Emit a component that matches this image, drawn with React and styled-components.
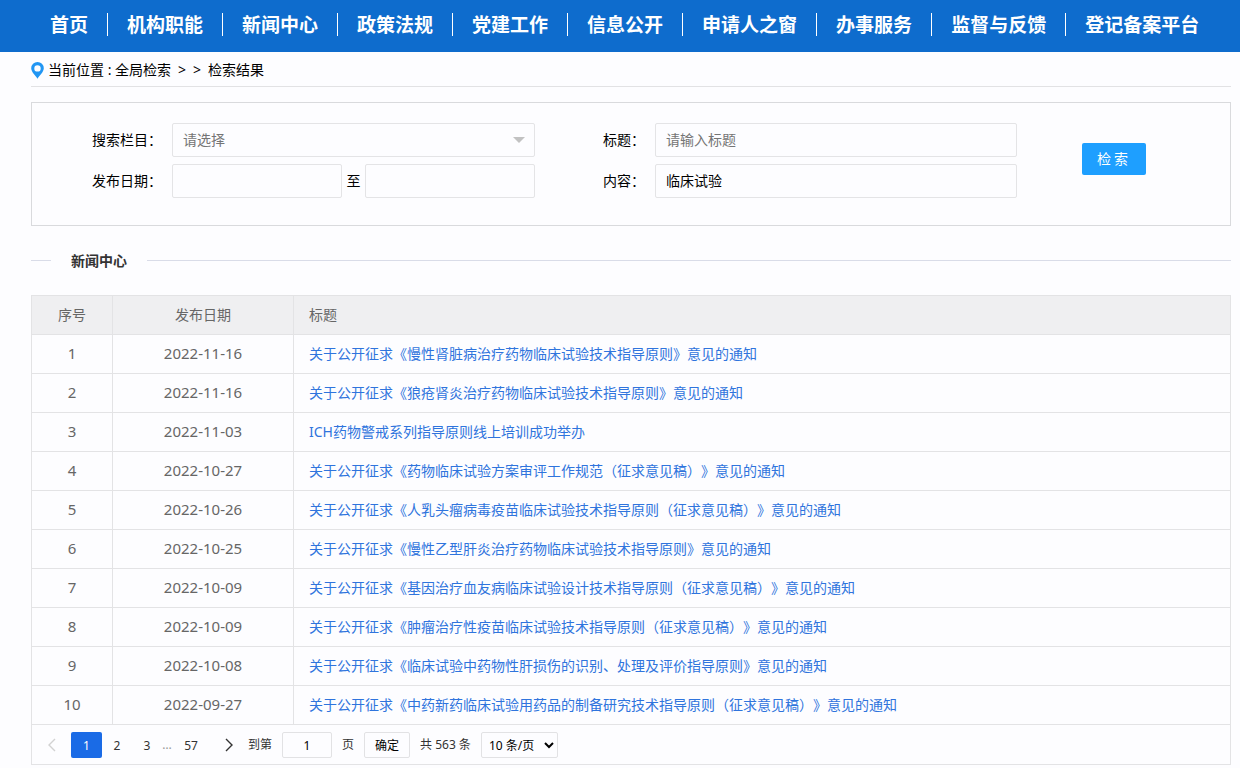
import React from "react";
import styled, { createGlobalStyle } from "styled-components";

const GlobalStyle = createGlobalStyle`
  *, *::before, *::after { box-sizing: border-box; }
  body {
    margin: 0;
    background: #fdfdff;
    color: #000;
    font: 14px/20px "Noto Sans", "Noto Sans CJK SC", sans-serif;
    text-spacing-trim: space-all;
  }
  input, select, button { font-family: inherit; margin: 0; }
  a { text-decoration: none; }
`;

const NavBar = styled.nav`
  display: flex;
  height: 52px;
  padding: 13px 0 0 31px;
  background: #0e6ccd;
`;

const NavLink = styled.a`
  height: 23px;
  padding: 0 19px;
  color: #fff;
  font-size: 19px;
  font-weight: 700;
  line-height: 25px;
  white-space: nowrap;
  & + & { border-left: 1px solid #fff; }
`;

const Page = styled.main`
  padding: 0 9px 3px 31px;
`;

const Breadcrumb = styled.div`
  display: flex;
  align-items: center;
  height: 35px;
  padding-top: 2px;
  border-bottom: 1px solid #e2e2e4;
`;

const PinIcon = styled.svg`
  width: 13px;
  height: 18px;
  margin-right: 4px;
`;

const CrumbSign = styled.span`
  margin-left: 7px;
  & + a { margin-left: 7px; }
`;

const CrumbLink = styled.a`
  color: #000;
`;

const SearchPanel = styled.form`
  display: grid;
  grid-template-columns: 80px minmax(0, 1fr) 56px minmax(0, 1fr) 64px;
  grid-template-rows: 34px 34px;
  row-gap: 7px;
  align-items: center;
  margin-top: 15px;
  padding: 20px 84px 27px 60px;
  border: 1px solid #d9dadd;
`;

const FieldLabel = styled.label`
  justify-self: end;
  margin-right: 10px;
  white-space: nowrap;
`;

const FieldCell = styled.div`
  position: relative;
  display: flex;
  align-items: center;
  margin-right: ${(p) => p.$after}px;
`;

const TextBox = styled.input`
  flex: 1;
  min-width: 0;
  height: 34px;
  padding: 0 10px 2px;
  border: 1px solid #e4e4e6;
  border-radius: 2px;
  background: #fdfdff;
  color: #000;
  font-size: 14px;
  &::placeholder { color: #757575; }
`;

const ColumnSelect = styled.select`
  width: 100%;
  height: 34px;
  padding: 0 30px 2px 10px;
  appearance: none;
  border: 1px solid #e4e4e6;
  border-radius: 2px;
  background: #fdfdff;
  color: #757575;
  font-size: 14px;
`;

const Caret = styled.span`
  position: absolute;
  right: 10px;
  top: 14px;
  border: 6px solid transparent;
  border-top-color: #c2c2c2;
  border-bottom: 0;
  pointer-events: none;
`;

const DateJoin = styled.span`
  width: 23px;
  text-align: center;
`;

const SearchButton = styled.button`
  grid-column: 5;
  grid-row: 1 / span 2;
  height: 32px;
  padding: 0 0 2px;
  margin-bottom: 4px;
  border: 0;
  border-radius: 2px;
  background: #1e9fff;
  color: #fff;
  font-size: 14px;
  letter-spacing: 3px;
`;

const SectionTitle = styled.h2`
  display: flex;
  align-items: center;
  gap: 20px;
  margin: 25px 0;
  color: #333;
  font-size: 14px;
  line-height: 19px;
  &::before, &::after {
    content: "";
    width: 20px;
    height: 1px;
    background: #d9dce8;
  }
  &::after { flex: 1; }
`;

const ResultTable = styled.table`
  width: 100%;
  table-layout: fixed;
  border-collapse: collapse;
  color: #666;
`;

const Row = styled.tr`
  height: 39px;
  background: ${(p) => (p.$head ? "#efeff1" : "transparent")};
`;

const HeadCell = styled.th`
  width: ${(p) => p.$width || "auto"};
  padding: 0 15px;
  border: 1px solid #e3e3e5;
  font-weight: 400;
  text-align: ${(p) => p.$align || "center"};
`;

const Cell = styled.td`
  padding: ${(p) => (p.$align ? "0 15px" : "0 15px 2px")};
  border: 1px solid #e3e3e5;
  font-size: ${(p) => (p.$align ? 14 : 15)}px;
  text-align: ${(p) => p.$align || "center"};
`;

const TitleLink = styled.a`
  color: #2f74dd;
`;

const Pager = styled.div`
  display: flex;
  align-items: center;
  padding: 7px 1px 6px;
  border: 1px solid #e3e3e5;
  border-top: 0;
  color: #333;
  font-size: 12px;
`;

const PageButton = styled.button`
  display: flex;
  align-items: center;
  justify-content: center;
  width: ${(p) => (p.$wide ? 38 : p.$current ? 31 : 30)}px;
  height: 26px;
  padding: 0;
  border: 0;
  border-radius: ${(p) => (p.$current ? 2 : 0)}px;
  background: ${(p) => (p.$current ? "#1a6be6" : "transparent")};
  color: ${(p) => (p.$current ? "#fff" : "#333")};
  font-size: 12px;
`;

const Ellipsis = styled.span`
  width: 10px;
  color: #999;
  text-align: center;
`;

const JumpTools = styled.div`
  display: flex;
  align-items: center;
  gap: 10px;
  white-space: nowrap;
`;

const JumpLabel = styled.label`
  display: flex;
  align-items: center;
  gap: 10px;
`;

const JumpInput = styled.input`
  width: 50px;
  height: 26px;
  padding: 0;
  border: 1px solid #e2e2e4;
  border-radius: 2px;
  background: #fdfdff;
  font-size: 12px;
  text-align: center;
`;

const ConfirmButton = styled.button`
  width: 46px;
  height: 26px;
  padding: 0;
  border: 1px solid #e2e2e4;
  border-radius: 2px;
  background: #fdfdff;
  color: #000;
  font-size: 12px;
`;

const SizeSelect = styled.select`
  width: 77px;
  height: 26px;
  padding: 0 0 0 3px;
  border: 1px solid #e2e2e4;
  border-radius: 2px;
  background: #fdfdff;
  color: #000;
  font-size: 12px;
`;

const navItems = [
  "首页", "机构职能", "新闻中心", "政策法规", "党建工作",
  "信息公开", "申请人之窗", "办事服务", "监督与反馈", "登记备案平台",
];

const results = [
  ["2022-11-16", "关于公开征求《慢性肾脏病治疗药物临床试验技术指导原则》意见的通知"],
  ["2022-11-16", "关于公开征求《狼疮肾炎治疗药物临床试验技术指导原则》意见的通知"],
  ["2022-11-03", "ICH药物警戒系列指导原则线上培训成功举办"],
  ["2022-10-27", "关于公开征求《药物临床试验方案审评工作规范（征求意见稿）》意见的通知"],
  ["2022-10-26", "关于公开征求《人乳头瘤病毒疫苗临床试验技术指导原则（征求意见稿）》意见的通知"],
  ["2022-10-25", "关于公开征求《慢性乙型肝炎治疗药物临床试验技术指导原则》意见的通知"],
  ["2022-10-09", "关于公开征求《基因治疗血友病临床试验设计技术指导原则（征求意见稿）》意见的通知"],
  ["2022-10-09", "关于公开征求《肿瘤治疗性疫苗临床试验技术指导原则（征求意见稿）》意见的通知"],
  ["2022-10-08", "关于公开征求《临床试验中药物性肝损伤的识别、处理及评价指导原则》意见的通知"],
  ["2022-09-27", "关于公开征求《中药新药临床试验用药品的制备研究技术指导原则（征求意见稿）》意见的通知"],
];

function Chevron({ d, color }) {
  return (
    <svg width="8" height="14" viewBox="0 0 8 14" fill="none" stroke={color} strokeWidth="1.4">
      <path d={d} />
    </svg>
  );
}

export default function App() {
  return (
    <>
      <GlobalStyle />
      <NavBar>
        {navItems.map((name) => (
          <NavLink href="#" key={name}>{name}</NavLink>
        ))}
      </NavBar>
      <Page>
        <Breadcrumb>
          <PinIcon viewBox="0 0 13 18" aria-hidden="true">
            <path
              fill="#2196f3"
              fillRule="evenodd"
              d="M6.5 1A6.3 6.3 0 0 0 .2 7.300c0 3.600 3.900 6.600 6.300 10.500 2.400-3.900 6.300-6.900 6.300-10.500A6.300 6.300 0 0 0 6.500 1Zm0 3.200a3.200 3.200 0 1 1 0 6.400 3.200 3.200 0 0 1 0-6.400Z"
            />
          </PinIcon>
          <span>当前位置&nbsp;:&nbsp;</span>
          <CrumbLink href="#">全局检索</CrumbLink>
          <CrumbSign>&gt;</CrumbSign>
          <CrumbSign>&gt;</CrumbSign>
          <CrumbLink href="#">检索结果</CrumbLink>
        </Breadcrumb>

        <SearchPanel onSubmit={(e) => e.preventDefault()}>
          <FieldLabel htmlFor="column">搜索栏目：</FieldLabel>
          <FieldCell $after={64}>
            <ColumnSelect id="column">
              <option>请选择</option>
            </ColumnSelect>
            <Caret />
          </FieldCell>
          <FieldLabel htmlFor="title">标题：</FieldLabel>
          <FieldCell $after={65}>
            <TextBox id="title" placeholder="请输入标题" />
          </FieldCell>
          <FieldLabel htmlFor="dateFrom">发布日期：</FieldLabel>
          <FieldCell $after={64}>
            <TextBox id="dateFrom" />
            <DateJoin>至</DateJoin>
            <TextBox id="dateTo" aria-label="结束日期" />
          </FieldCell>
          <FieldLabel htmlFor="content">内容：</FieldLabel>
          <FieldCell $after={65}>
            <TextBox id="content" defaultValue="临床试验" />
          </FieldCell>
          <SearchButton type="submit">检索</SearchButton>
        </SearchPanel>

        <SectionTitle>新闻中心</SectionTitle>

        <ResultTable>
          <thead>
            <Row $head>
              <HeadCell $width="81px">序号</HeadCell>
              <HeadCell $width="181px">发布日期</HeadCell>
              <HeadCell $align="left">标题</HeadCell>
            </Row>
          </thead>
          <tbody>
            {results.map(([date, title], i) => (
              <Row key={title}>
                <Cell>{i + 1}</Cell>
                <Cell>{date}</Cell>
                <Cell $align="left"><TitleLink href="#">{title}</TitleLink></Cell>
              </Row>
            ))}
          </tbody>
        </ResultTable>

        <Pager>
          <PageButton $wide disabled aria-label="上一页">
            <Chevron d="M7 1 1 7l6 6" color="#d2d2d2" />
          </PageButton>
          <PageButton $current>1</PageButton>
          <PageButton>2</PageButton>
          <PageButton>3</PageButton>
          <Ellipsis>…</Ellipsis>
          <PageButton $wide>57</PageButton>
          <PageButton $wide aria-label="下一页">
            <Chevron d="m1 1 6 6-6 6" color="#333" />
          </PageButton>
          <JumpTools>
            <JumpLabel>
              到第
              <JumpInput defaultValue="1" />
              页
            </JumpLabel>
            <ConfirmButton>确定</ConfirmButton>
            <span>共 563 条</span>
            <SizeSelect aria-label="每页条数">
              <option>10 条/页</option>
            </SizeSelect>
          </JumpTools>
        </Pager>
      </Page>
    </>
  );
}
